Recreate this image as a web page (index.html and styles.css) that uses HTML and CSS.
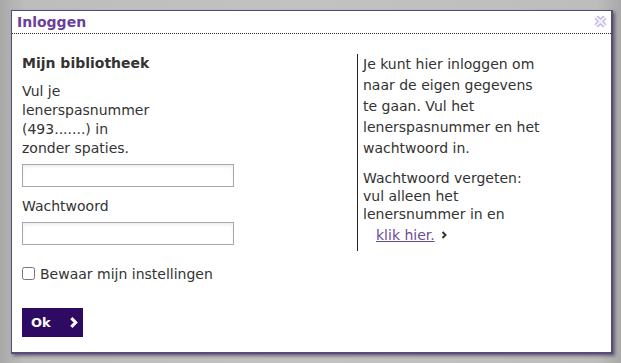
FILE: index.html
```html
<!DOCTYPE html>
<html lang="nl">
<head>
  <meta charset="UTF-8">
  <title>Inloggen</title>
  <link rel="stylesheet" href="styles.css">
</head>
<body>
  <div class="dialog">
    <div class="dialog-header">
      <span class="dialog-title">Inloggen</span>
      <button class="close-button" aria-label="Sluiten">
        <svg class="close-icon" viewBox="0 0 12 12">
          <path class="close-outer" d="M2 2 L10 10 M10 2 L2 10"/>
          <path class="close-inner" d="M2 2 L10 10 M10 2 L2 10"/>
        </svg>
      </button>
    </div>

    <div class="dialog-body">
      <!-- Login form -->
      <form class="login-form">
        <div class="form-title">Mijn bibliotheek</div>
        <label class="field-label" for="pasnummer">Vul je lenerspasnummer (493.......) in zonder spaties.</label>
        <input id="pasnummer" class="text-input" type="text">
        <label class="field-label field-label-short" for="wachtwoord">Wachtwoord</label>
        <input id="wachtwoord" class="text-input" type="password">
        <label class="remember">
          <input type="checkbox" class="remember-check">
          Bewaar mijn instellingen
        </label>
        <button type="button" class="ok-button">
          Ok
          <svg class="ok-icon" viewBox="0 0 8 12">
            <polyline points="2,2 6,6 2,10"/>
          </svg>
        </button>
      </form>

      <!-- Help text -->
      <div class="help">
        <p class="help-intro">Je kunt hier inloggen om naar de eigen gegevens te gaan. Vul het lenerspasnummer en het wachtwoord in.</p>
        <p class="help-forgot">Wachtwoord vergeten: vul alleen het lenersnummer in en</p>
        <div class="help-link">
          <a href="#">klik hier.</a>
          <svg class="link-icon" viewBox="0 0 6 8">
            <polyline points="1.5,1 4.5,4 1.5,7"/>
          </svg>
        </div>
      </div>
    </div>
  </div>
</body>
</html>
```

FILE: styles.css
```css
* {
  box-sizing: border-box;
}

body {
  margin: 0;
  padding: 10px 0 0 11px;
  height: 363px;
  overflow: hidden;
  background: linear-gradient(90deg, #a9a9a9 0%, #bdbdbd 4%, #c2c2c2 50%, #bdbdbd 96%, #a9a9a9 100%);
  font-family: "DejaVu Sans", Verdana, sans-serif;
  font-size: 14px;
  color: #333;
}

.dialog {
  width: 602px;
  height: 344px;
  background-color: #fff;
  border: 1px solid #5a4a7c;
  border-right-width: 2px;
  border-bottom-width: 2px;
  box-shadow: 2px 2px 3px rgba(40, 30, 60, 0.55);
}

.dialog-header {
  display: flex;
  align-items: center;
  justify-content: space-between;
  height: 23px;
  padding: 0 4px 0 5px;
  border-bottom: 1px dotted #333;
}

.dialog-title {
  font-weight: bold;
  color: #6a3f9c;
  line-height: 22px;
}

.close-button {
  display: flex;
  padding: 0;
  margin: 0 0 2px 0;
  border: none;
  background: none;
  cursor: pointer;
}

.close-icon {
  width: 13px;
  height: 13px;
}

.close-outer {
  stroke: #c2b2e6;
  stroke-width: 4.4;
  fill: none;
}

.close-inner {
  stroke: #f4f0fb;
  stroke-width: 2;
  fill: none;
}

.dialog-body {
  display: flex;
  padding: 20px 10px 0 10px;
}

.login-form {
  display: flex;
  flex-direction: column;
  align-items: flex-start;
  width: 335px;
}

.form-title {
  font-weight: bold;
  line-height: 18px;
  margin-bottom: 10px;
}

.field-label {
  display: block;
  width: 132px;
  line-height: 19px;
}

.field-label-short {
  margin-top: 10px;
}

.text-input {
  display: block;
  width: 212px;
  height: 23px;
  margin-top: 6px;
  border: 1px solid #a9a9a9;
  box-shadow: inset 0 2px 3px rgba(0, 0, 0, 0.07);
  font-family: inherit;
  font-size: 13px;
}

.remember {
  display: flex;
  align-items: center;
  gap: 5px;
  margin-top: 20px;
  line-height: 18px;
}

.remember-check {
  width: 13px;
  height: 13px;
  margin: 0 0 2px 0;
}

.ok-button {
  display: inline-flex;
  align-items: center;
  gap: 18px;
  width: 61px;
  height: 29px;
  margin-top: 25px;
  padding: 0 0 0 9px;
  border: none;
  background-color: #2e0a63;
  color: #fff;
  font-family: inherit;
  font-size: 13px;
  font-weight: bold;
  cursor: pointer;
}

.ok-icon {
  width: 9px;
  height: 13px;
  stroke: #fff;
  stroke-width: 2.8;
  fill: none;
}

.help {
  width: 188px;
  height: 197px;
  padding-left: 5px;
  border-left: 1px solid #222;
}

.help p {
  margin: 0;
}

.help-intro {
  line-height: 21px;
}

.help-forgot {
  margin-top: 10px !important;
  line-height: 18px;
}

.help-link {
  display: flex;
  align-items: center;
  gap: 6px;
  padding-left: 13px;
  margin-top: 3px;
  line-height: 18px;
}

.help-link a {
  color: #6a4c9c;
}

.link-icon {
  width: 6px;
  height: 8px;
  stroke: #333;
  stroke-width: 2;
  fill: none;
}
```
